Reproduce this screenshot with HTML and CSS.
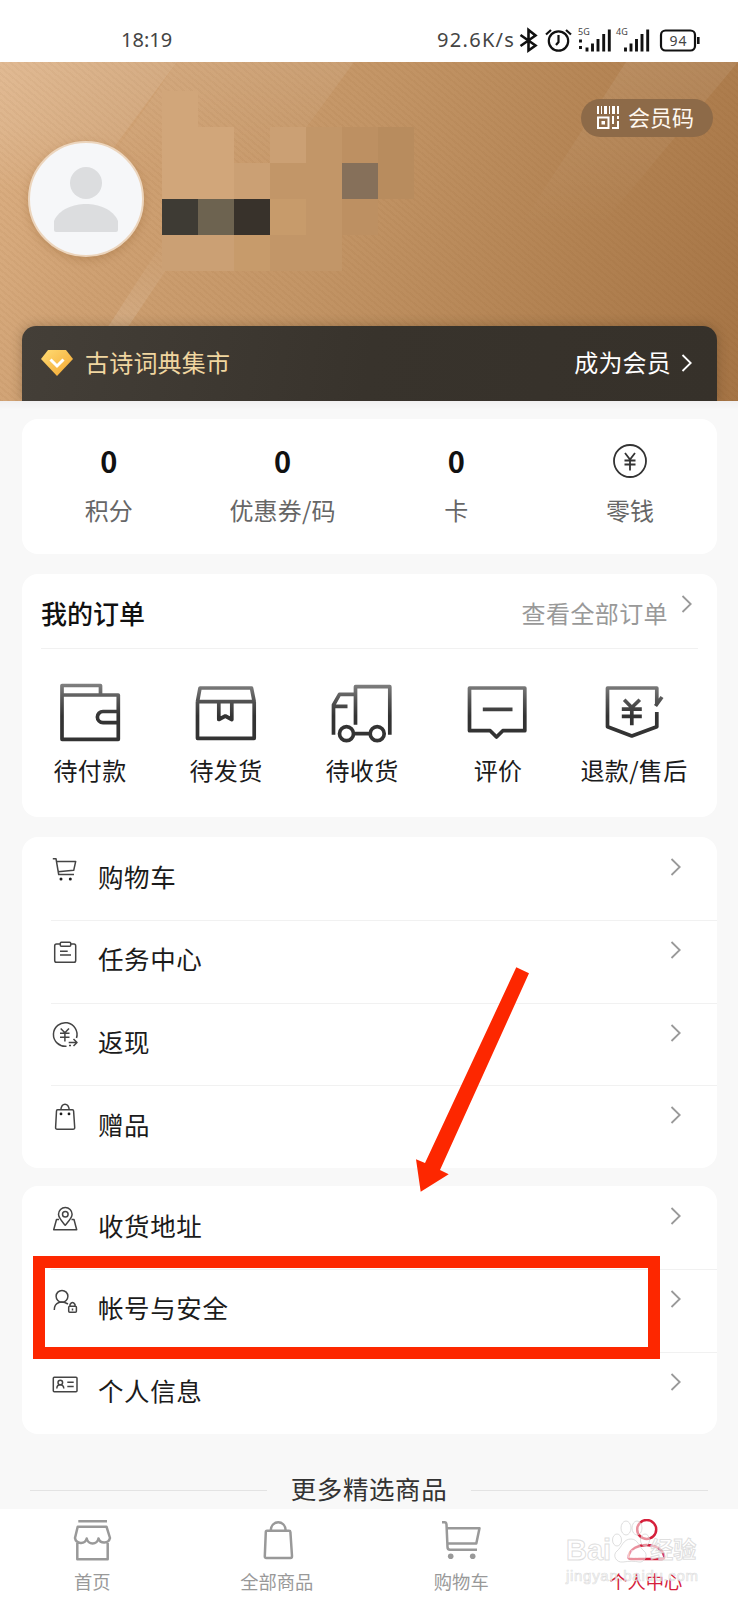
FILE: index.html
```html
<!DOCTYPE html>
<html lang="zh-CN">
<head>
<meta charset="utf-8">
<title>个人中心</title>
<link rel="stylesheet" href="styles.css">
</head>
<body>
<svg class="defs" width="0" height="0" aria-hidden="true">
  <defs>
    <linearGradient id="ink" gradientUnits="userSpaceOnUse" x1="0" y1="2" x2="0" y2="34">
      <stop offset="0" stop-color="#808080"/><stop offset=".5" stop-color="#555"/><stop offset="1" stop-color="#333"/>
    </linearGradient>
    <linearGradient id="gem" x1="0" y1="0" x2="1" y2="1">
      <stop offset="0" stop-color="#ffdc74"/><stop offset="1" stop-color="#f3a52f"/>
    </linearGradient>
    <linearGradient id="band" x1="0" y1="0" x2="0" y2="1">
      <stop offset="0" stop-color="#fff" stop-opacity=".12"/><stop offset=".5" stop-color="#fff" stop-opacity=".09"/><stop offset="1" stop-color="#fff" stop-opacity="0"/>
    </linearGradient>
    <linearGradient id="band-soft" x1="0" y1="0" x2="0" y2="1">
      <stop offset="0" stop-color="#fff" stop-opacity=".08"/><stop offset="1" stop-color="#fff" stop-opacity="0"/>
    </linearGradient>
    <linearGradient id="band-up" x1="0" y1="0" x2="0" y2="1">
      <stop offset="0" stop-color="#fff" stop-opacity="0"/><stop offset="1" stop-color="#fff" stop-opacity=".13"/>
    </linearGradient>
    <symbol id="chevron" viewBox="0 0 12 20"><path d="M1.5 2 9.7 10 1.5 18" fill="none" stroke="currentColor" stroke-width="1.8"/></symbol>
  </defs>
</svg>

<header class="status">
  <span class="clock">18:19</span>
  <span class="speed">92.6K/s</span>
  <svg class="status-icons" viewBox="518 24 184 32" fill="none" stroke="#111" stroke-width="2.2">
    <path d="M520.500 35 535.500 45.500 528.500 50.500V30L535.500 35.500 520.500 46" stroke-width="2.6"/>
    <circle cx="558.500" cy="41" r="9.700"/>
    <path d="M558.500 35v7l-2.500 3M546 34.500l5-4.500M571 34.500l-5-4.500"/>
    <path d="M580.500 39.500v3M580.500 46v3M587 47.500v4M592.500 43.500v8M598 39v12.500M603.700 34v17.500M609.300 29.500v22" stroke-width="2.9"/>
    <path d="M625.500 47.500v4M631 43.500v8M636.500 39v12.500M642 34v17.500M647.700 29.500v22" stroke-width="2.900"/>
    <rect x="661" y="30.500" width="34" height="20" rx="4.500"/>
    <path d="M698.300 37v7" stroke-width="2.600"/>
    <g class="tiny"><text x="578" y="35">5G</text><text x="616" y="35">4G</text></g>
    <text class="charge" x="669.500" y="45.500">94</text>
  </svg>
</header>

<section class="hero">
  <svg class="hero-light" viewBox="0 0 738 338">
    <path d="M0 0H177L80 131H0Z" fill="url(#band)"/>
    <path d="M177 0H354L270 115H98Z" fill="url(#band-soft)"/>
    <path d="M188 175 128 265H108L166 175Z" fill="url(#band-up)"/>
    <path d="M626 0H738L600 165H520Z" fill="url(#band-soft)"/>
  </svg>
  <div class="mosaic">
    <i class="a"></i><i></i><i></i><i></i><i></i><i></i><i></i>
    <i class="a"></i><i class="a"></i><i></i><i class="b"></i><i class="d"></i><i class="e"></i><i class="f"></i>
    <i class="a"></i><i class="a"></i><i class="b"></i><i class="d"></i><i class="d"></i><i class="grey"></i><i class="f"></i>
    <i class="ink1"></i><i class="ink2"></i><i class="ink3"></i><i class="c"></i><i class="d"></i><i class="e"></i><i></i>
    <i class="b"></i><i class="b"></i><i class="c"></i><i class="d"></i><i class="d"></i><i></i><i></i>
  </div>
  <div class="hero-top">
    <div class="avatar">
      <svg viewBox="0 0 112 112" fill="#dcdddf"><circle cx="56" cy="40" r="16"/><path d="M24 87V78C29 66 44 61 56 61S83 66 88 78V87Q88 89 86 89H26Q24 89 24 87Z"/></svg>
    </div>
    <div class="code-pill">
      <svg viewBox="0 0 24 24" fill="#fff"><path d="M1 0h2v8H1zM5 0h1v8H5zM8 0h3v8H8zM13 0h1v8h-1zM16 0h3v8h-3zM21 0h2v8h-2zM5.500 15h3.500v3.500H5.500zM16 10h2v8h-2zM21 10h2v3h-2zM21 15h2v8h-7v-2h5z"/><path d="M2 11.500h10.500V22H2z" fill="none" stroke="#fff" stroke-width="2"/></svg>
      <span>会员码</span>
    </div>
  </div>
  <div class="member">
    <svg class="gem" viewBox="0 0 34 28"><path d="M8 1H26L33 10 17 27 1 10Z" fill="url(#gem)"/><path d="M10.500 10.500 17 17 23.500 10.500" fill="none" stroke="#fff" stroke-width="3"/></svg>
    <span class="shop">古诗词典集市</span>
    <span class="join">成为会员</span>
    <svg class="go"><use href="#chevron"/></svg>
  </div>
</section>

<main>
  <section class="card stats">
    <div><b>0</b><span>积分</span></div>
    <div><b>0</b><span>优惠券/码</span></div>
    <div><b>0</b><span>卡</span></div>
    <div><svg viewBox="0 0 36 36" fill="none" stroke="#333" stroke-width="1.800"><circle cx="18" cy="18" r="16"/><path d="M13 10 18 16.500 23 10M12.500 17.500H23.500M12.500 21.500H23.500M18 16.500V27.500"/></svg><span>零钱</span></div>
  </section>

  <section class="card orders">
    <div class="orders-head"><h2>我的订单</h2><span>查看全部订单</span><svg class="more"><use href="#chevron"/></svg></div>
    <div class="orders-grid">
      <div><svg viewBox="0 0 64 62"><path d="M4 13H60.300V57.300H4ZM4 13V3.500H42.500V13M60 29.500H45A5.600 5.600 0 0 0 45 40.700H60"/></svg><span>待付款</span></div>
      <div><svg viewBox="0 0 64 62"><path d="M3.500 19.700H60.200V56.300H3.500ZM3.500 19.700 6 6H57.500L60.200 19.700M24.800 20V37.500L31.300 34 37.800 37.500V20"/></svg><span>待发货</span></div>
      <div><svg viewBox="0 0 64 62"><path d="M3.500 52.700V23L9.500 12.300H25.500M3.500 24.300H17.500M25.500 42.700V4.700H59.800V52.700M24 51.700H40"/><circle cx="16.500" cy="51.700" r="7"/><circle cx="47.200" cy="51.700" r="7"/></svg><span>待收货</span></div>
      <div><svg viewBox="0 0 64 62"><path d="M3.500 6H58.800V48.700H36.800L30.500 55 24.200 48.700H3.500ZM16.800 27.400H46.500"/></svg><span>评价</span></div>
      <div><svg viewBox="0 0 64 62"><path d="M54.800 22V6H5.500V44.700L29.800 54 54.800 44.700V30M53.500 24 60 15M22.200 17.700 29.800 25.500 37.800 17.700M19.800 27.200H39.800M19.800 34.400H39.800M29.800 25V43.300"/></svg><span>退款/售后</span></div>
    </div>
  </section>

  <nav class="card list">
    <a><svg class="ico" viewBox="0 0 28 30"><path d="M1.800 4.700H5L7.700 20.500H23M5.500 7.400H24.700L22.700 16.300 7 17.800"/><circle class="dot" cx="10" cy="25" r="1.500"/><circle class="dot" cx="19.300" cy="25" r="1.500"/></svg><span>购物车</span><svg class="more"><use href="#chevron"/></svg></a>
    <a><svg class="ico" viewBox="0 0 28 30"><path d="M9.300 7H5.500Q3.700 7 3.700 9V23.500Q3.700 25.300 5.500 25.300H23Q24.700 25.300 24.700 23.500V9Q24.700 7 23 7H19.700M9 14.300H16.700M9 18H20"/><rect x="9.300" y="5.300" width="10.400" height="4" rx="1"/></svg><span>任务中心</span><svg class="more"><use href="#chevron"/></svg></a>
    <a><svg class="ico" viewBox="0 0 28 30"><path d="M15.500 26.200A11.800 11.800 0 1 1 25.500 18M9.700 8.500 13.900 12.700 18 8.500M9 13.200H18.500M9 17.200H18.500M13.900 12.700V21.500M17.700 22.500H25.700M22.500 19 26 22.500 22.500 26M20 25.500H18"/></svg><span>返现</span><svg class="more"><use href="#chevron"/></svg></a>
    <a><svg class="ico" viewBox="0 0 28 30"><path d="M6.500 7.800H21.500Q22.500 7.800 22.600 9L23.700 25.500Q23.800 27.200 22 27.200H6.200Q4.500 27.200 4.600 25.500L5.500 9Q5.500 7.800 6.500 7.800ZM9.800 7.800Q10.500 2.300 14 2.300T18.300 7.800"/><circle class="dot" cx="10" cy="11.900" r="1.400"/><circle class="dot" cx="18" cy="11.900" r="1.400"/></svg><span>赠品</span><svg class="more"><use href="#chevron"/></svg></a>
  </nav>

  <nav class="card list">
    <a><svg class="ico" viewBox="0 0 28 30"><path d="M14.200 22.300C11.500 19 7.500 15 7.500 11.300A6.800 6.800 0 0 1 21.100 11.300C21.100 15 17 19 14.200 22.300ZM8 16.500H5.500L2.700 26.700H25.700L23 16.500H20.500"/><circle cx="14.300" cy="11.300" r="2.800"/></svg><span>收货地址</span><svg class="more"><use href="#chevron"/></svg></a>
    <a><svg class="ico" viewBox="0 0 28 30"><circle cx="11" cy="10.300" r="5.900"/><path d="M3.300 24C3.300 15.500 11 14.500 17 18M19 20.500V18.500Q21.500 14.500 24 18.500V20.500M21.500 22.500V24.500"/><rect x="17.700" y="20.300" width="7.700" height="6" rx="1"/></svg><span>帐号与安全</span><svg class="more"><use href="#chevron"/></svg></a>
    <a><svg class="ico" viewBox="0 0 28 30"><rect x="2.300" y="8.200" width="23.700" height="14.600" rx="1"/><circle cx="9.300" cy="13.500" r="2.300"/><path d="M5.800 19.500Q6 15.700 9.300 15.800T12.800 19.500M16.300 13.200H22.700M16.300 17.500H22.700"/></svg><span>个人信息</span><svg class="more"><use href="#chevron"/></svg></a>
  </nav>

  <h3 class="picks">更多精选商品</h3>
</main>

<footer class="tabs">
  <a><svg viewBox="0 0 44 44"><path d="M8.300 2.300H37M7.700 7.700H36.500L40 19A6 6 0 0 1 28.500 19.500 6 6 0 0 1 16.700 19.500 6 6 0 0 1 5 19ZM7.300 24V40.300H37.700V24"/></svg><span>首页</span></a>
  <a><svg viewBox="0 0 44 44"><path d="M12 11.700H34Q35.300 11.700 35.400 13L37 37Q37 39 35.500 39H11.300Q9.700 39 9.800 37L10.800 13Q10.800 11.700 12 11.700ZM15.700 11.500C16.500 .5 30 .5 30.700 11.500"/></svg><span>全部商品</span></a>
  <a><svg viewBox="0 0 44 44"><path d="M3 3.300H5.500Q7.300 3.300 7.500 5.500L8.500 28Q8.500 30.700 11 30.700H38M8 9.300H40.500L37.300 24.600H8.500"/><circle class="dot" cx="11.700" cy="37.300" r="2.800"/><circle class="dot" cx="33.700" cy="37.300" r="2.800"/></svg><span>购物车</span></a>
  <a class="active"><svg viewBox="0 0 44 44"><circle cx="22.700" cy="10.500" r="9.500"/><path d="M7 40Q4 40 4.300 37.500C8 22 37 22 40.300 37.500Q40.500 40 38 40Z"/></svg><span>个人中心</span></a>
</footer>

<div class="mark">
  <div class="mark-name"><span>Bai</span><svg viewBox="0 0 38 44"><path d="M19 19C11 19 10 27 5 31S4 43 11 42 22 41 27 42 37 35 32 31 26 19 19 19Z"/><ellipse cx="5" cy="20" rx="4.500" ry="6"/><ellipse cx="14" cy="8" rx="5" ry="7"/><ellipse cx="25" cy="8" rx="5" ry="7"/><ellipse cx="33" cy="20" rx="4.500" ry="6"/><text x="10" y="38">du</text></svg><span class="mark-cn">经验</span></div>
  <div class="mark-url">jingyan.baidu.com</div>
</div>
<div class="highlight"></div>
<svg class="arrow" viewBox="0 0 114 226"><path d="M101.300 1.300 114 7.300 25 204 33.700 208.300 5.700 225.700 1 193.300 10 197Z" fill="#fd2700"/></svg>
</body>
</html>
```
FILE: styles.css
```css
* { box-sizing: border-box; }
body {
  margin: 0;
  position: relative;
  width: 738px;
  height: 1600px;
  overflow: hidden;
  display: flex;
  flex-direction: column;
  background: #f8f8f8;
  color: #1b1b1b;
  font-family: "Noto Sans CJK SC", "Noto Sans", sans-serif;
}
svg { display: block; flex: none; }
.defs { position: absolute; }
h2, h3 { margin: 0; }

.status {
  flex: none;
  height: 61.5px;
  padding: 0 36px 0 121px;
  display: flex;
  align-items: center;
  background: #fff;
  color: #444;
  font: 20px/30px "Noto Sans", sans-serif;
}
.clock, .speed { padding-top: 18px; }
.clock { width: 316px; }
.speed { width: 81px; white-space: nowrap; letter-spacing: 1.3px; }
.status-icons { width: 184px; height: 32px; margin-top: 18px; }
.status-icons text { stroke: none; fill: #444; }
.tiny { font-size: 9px; }
.charge { font-size: 14px; letter-spacing: 1px; }

.hero {
  flex: none;
  position: relative;
  height: 339px;
  padding: 0 21px 0 22px;
  display: flex;
  flex-direction: column;
  justify-content: space-between;
  background:
    repeating-linear-gradient(40deg, rgba(120, 70, 20, .05) 0 2px, transparent 2px 5px),
    linear-gradient(112deg, #ddb185 0%, #cfa173 20%, #c39566 45%, #b28252 75%, #a57445 100%);
}
.hero-light { position: absolute; left: 0; top: 0; width: 738px; height: 338px; }
.mosaic {
  position: absolute;
  left: 162px;
  top: 29px;
  display: grid;
  grid-template: repeat(5, 36px) / repeat(7, 36px);
}
.a { background: #d1a67a; }
.b { background: #cba074; }
.c { background: #c79b6b; }
.d { background: #c29668; }
.e { background: #bd9062; }
.f { background: #b88c5e; }
.grey { background: #86705a; }
.ink1 { background: #3e3b34; }
.ink2 { background: #6d6350; }
.ink3 { background: #38322b; }
.hero-top { position: relative; display: flex; justify-content: space-between; }
.avatar {
  width: 116px;
  height: 116px;
  margin: 79px 0 0 6px;
  border: 2px solid #ecd5bd;
  border-radius: 50%;
  background: #f6f7f9;
  box-shadow: 0 3px 8px rgba(120, 70, 20, .22);
}
.code-pill {
  width: 132px;
  height: 38px;
  margin: 37px 4px 0 0;
  padding-left: 15px;
  display: flex;
  align-items: center;
  gap: 8px;
  border-radius: 19px;
  background: #8d6a48;
  color: #fff8ef;
  font-size: 22px;
  line-height: 36px;
  white-space: nowrap;
}
.code-pill svg { width: 24px; height: 24px; }
.code-pill span { margin-top: -4px; }
.member {
  position: relative;
  height: 75px;
  padding: 0 24px 0 18px;
  display: flex;
  align-items: center;
  border-radius: 14px 14px 0 0;
  background: linear-gradient(100deg, #443f38, #38332c 50%, #36312a);
  box-shadow: 0 0 12px rgba(50, 35, 20, .3);
  color: #fff;
  font-size: 24px;
  white-space: nowrap;
}
.gem { width: 34px; height: 28px; margin-right: 11px; }
.shop { margin-top: -4px; color: #f0d6a0; letter-spacing: .2px; }
.join { margin: -4px 0 0 auto; letter-spacing: .2px; }
.go { width: 12px; height: 20px; margin-left: 10px; }

main {
  position: relative;
  flex: none;
  height: 1108px;
  padding: 18.500px 21px 0 22px;
  display: flex;
  flex-direction: column;
  background: #f8f8f8;
  box-shadow: inset 0 10px 8px -8px rgba(60, 50, 60, .06);
}
.card { flex: none; background: #fff; border-radius: 16px; }
.stats {
  height: 135px;
  margin-bottom: 20px;
  padding-top: 25px;
  display: grid;
  grid-template-columns: repeat(4, 1fr);
}
.stats div { display: flex; flex-direction: column; align-items: center; }
.stats b { height: 36px; font: 700 29px/33px "Noto Sans CJK SC", sans-serif; color: #111; }
.stats svg { width: 36px; height: 36px; margin-top: -1px; margin-bottom: 1px; }
.stats span { margin-top: 12px; font-size: 24px; line-height: 36px; letter-spacing: .2px; color: #666; }

.orders { height: 243px; margin-bottom: 20px; }
.orders-head {
  height: 75px;
  margin: 0 19px;
  padding-top: 3px;
  display: flex;
  align-items: center;
  border-bottom: 1.500px solid #f1f1f1;
}
.orders-head h2 { font-size: 26px; font-weight: 500; color: #111; }
.orders-head span { margin-left: auto; font-size: 24px; letter-spacing: .4px; color: #999; }
.more { width: 12px; height: 20px; color: #999; }
.orders-head .more { margin: -18px 5px 0 13px; }
.orders-grid {
  padding: 33px 14px 0 0;
  display: grid;
  grid-template-columns: repeat(5, 136px);
}
.orders-grid div { display: flex; flex-direction: column; align-items: center; }
.orders-grid svg { width: 64px; height: 62px; fill: none; stroke: url(#ink); stroke-width: 3.700; stroke-linejoin: round; }
.orders-grid span { margin-top: 8px; font-size: 24px; line-height: 36px; letter-spacing: .3px; white-space: nowrap; }

.list { padding: 1px 0 0 29px; margin-bottom: 18px; }
.list a {
  height: 82.750px;
  padding: 16px 35px 0 0;
  display: flex;
  align-items: flex-start;
  border-bottom: 1.500px solid #f1f1f1;
}
.list a:last-child { height: 81.750px; border-bottom: 0; }
.ico { width: 28px; height: 30px; fill: none; stroke: #444; stroke-width: 1.500; stroke-linejoin: round; }
.dot { fill: currentColor; stroke: none; }
.list span { flex: 1; margin: 2.600px 0 0 19px; font-size: 25.500px; line-height: 38px; letter-spacing: .6px; }
.list .more { margin-top: 3px; }
.picks {
  margin: 17px 9px 0 8px;
  display: flex;
  align-items: center;
  justify-content: space-between;
  font-size: 25.500px;
  line-height: 38px;
  font-weight: 400;
  letter-spacing: .6px;
  color: #333;
}
.picks::before, .picks::after { content: ""; width: 237px; height: 1px; margin-top: 5px; background: #e3e3e3; }

.tabs {
  position: relative;
  flex: 1;
  display: grid;
  grid-template-columns: repeat(4, 1fr);
  background: #fff;
  color: #999;
}
.tabs a { padding-top: 10px; display: flex; flex-direction: column; align-items: center; }
.tabs svg { width: 44px; height: 44px; fill: none; stroke: currentColor; stroke-width: 2.500; stroke-linejoin: round; }
.tabs span { margin-top: 4px; font-size: 18.300px; line-height: 28px; }
.tabs .dot { fill: currentColor; stroke: none; }
.tabs .active { color: #d5203b; }

.mark {
  position: absolute;
  left: 566px;
  top: 1518px;
  width: 134px;
  color: rgba(255, 255, 255, .7);
  -webkit-text-stroke: 1px rgba(205, 205, 205, .65);
  font-family: "Liberation Sans", "Noto Sans CJK SC", sans-serif;
  font-weight: 700;
}
.mark-name { height: 49px; display: flex; align-items: flex-end; font-size: 29px; line-height: 34px; white-space: nowrap; }
.mark-name svg { width: 38px; height: 44px; margin: 0 0 3px 1px; fill: rgba(255, 255, 255, .5); stroke: rgba(205, 205, 205, .65); }
.mark-name text { font-size: 14px; stroke: none; }
.mark-cn { font-size: 23px; }
.mark-url { font-size: 15px; line-height: 18px; font-weight: 400; letter-spacing: .7px; -webkit-text-stroke-width: .7px; }

.highlight {
  position: absolute;
  left: 33px;
  top: 1255.500px;
  width: 627px;
  height: 103px;
  border: 12px solid #fd2700;
}
.arrow { position: absolute; left: 415px; top: 966px; width: 114px; height: 226px; }
```
